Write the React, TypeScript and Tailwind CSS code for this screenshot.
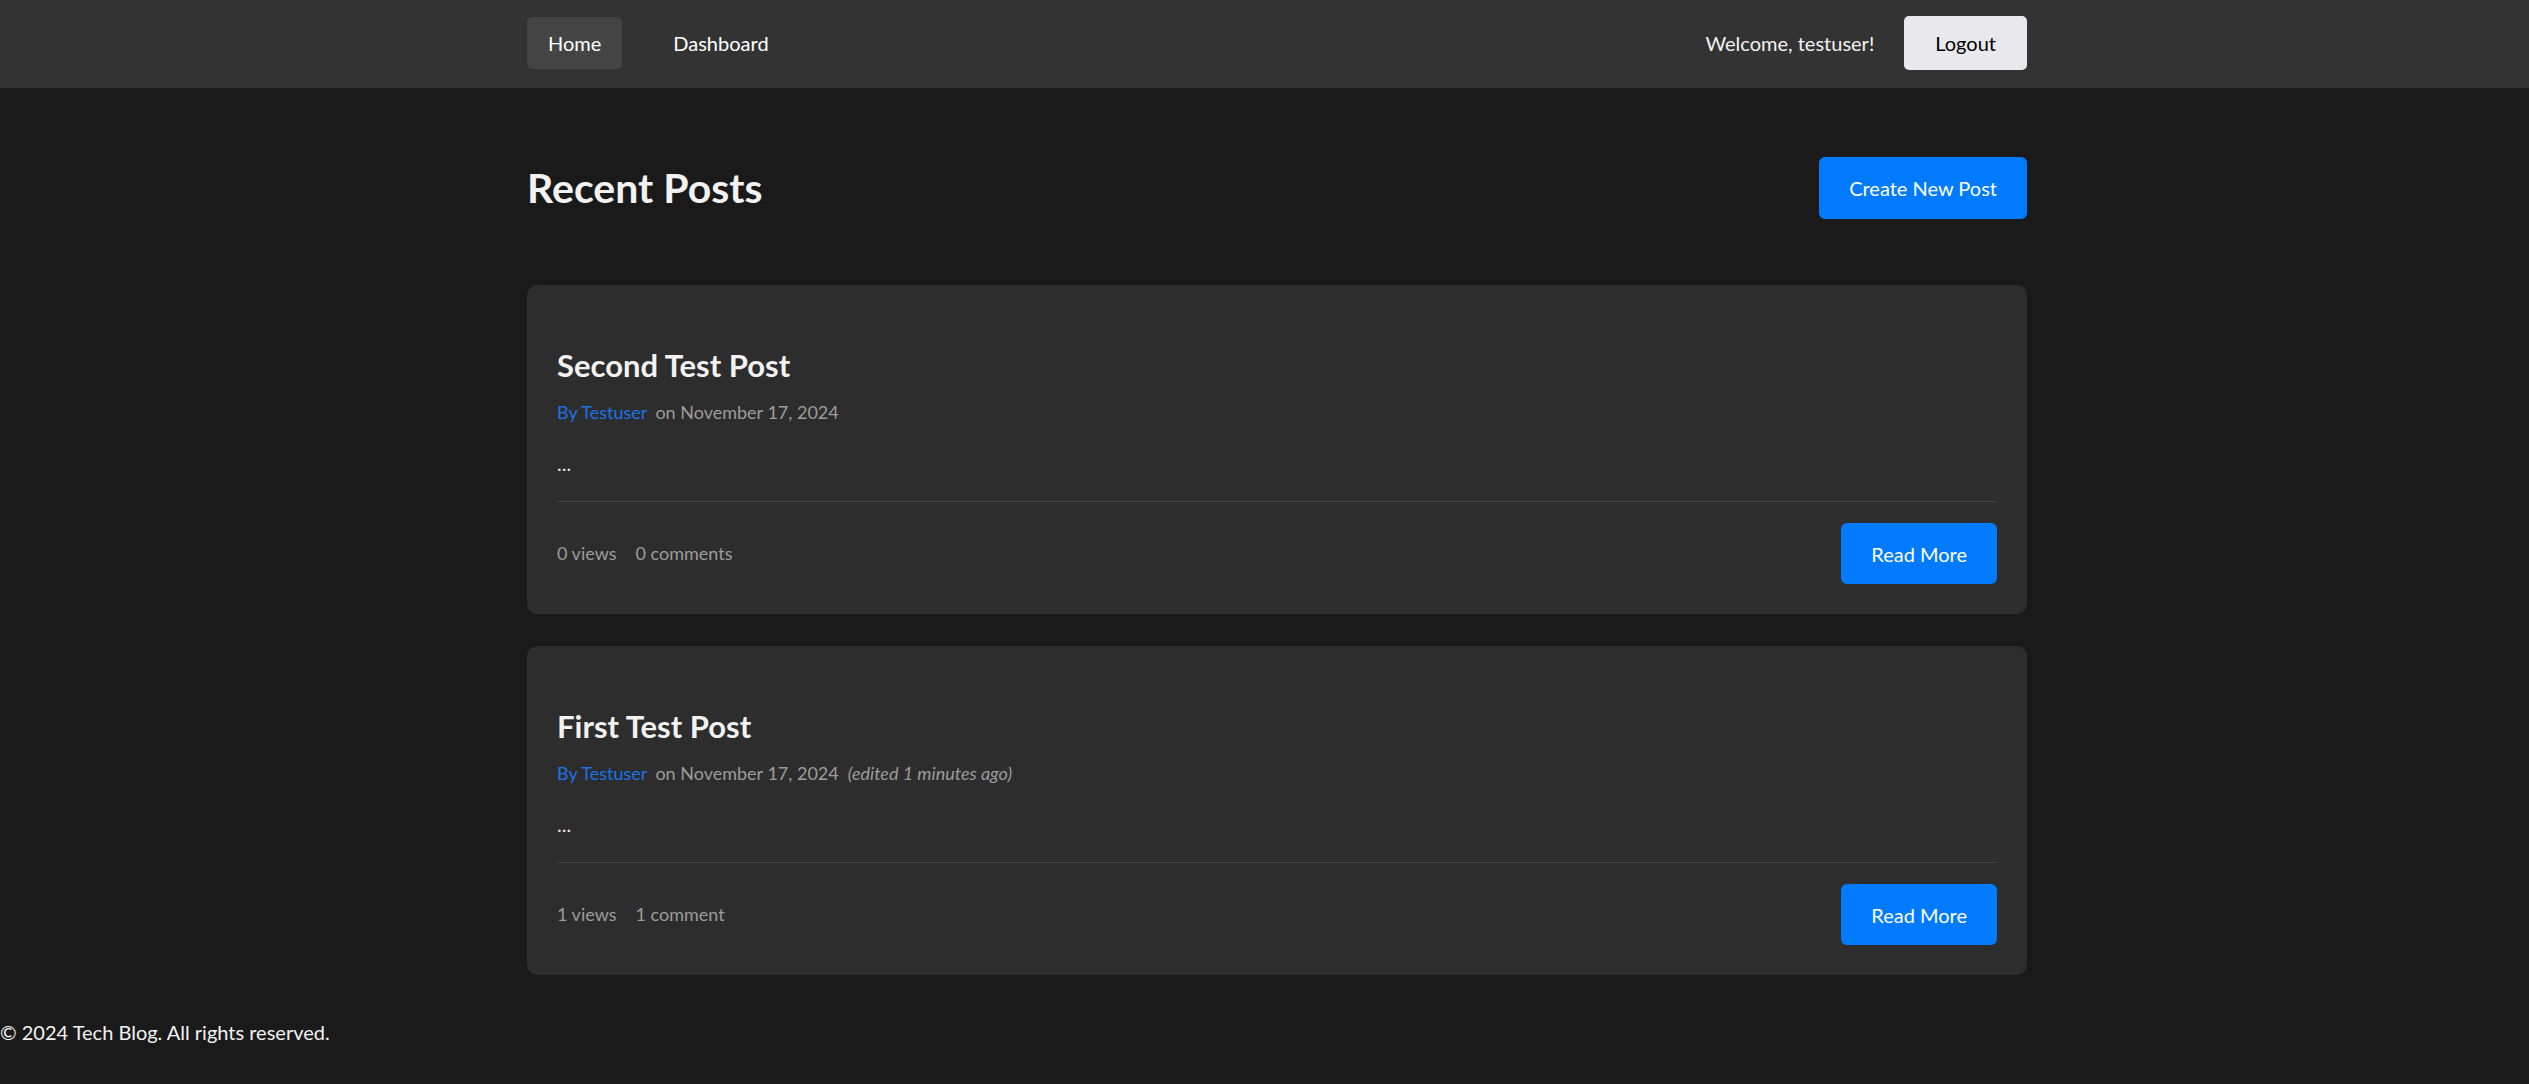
import React from "react";

const font = { fontFamily: "Lato, 'Noto Sans', sans-serif" };

type Post = {
  title: string;
  date: string;
  edited?: string;
  views: string;
  comments: string;
};

const posts: Post[] = [
  { title: "Second Test Post", date: "on November 17, 2024", views: "0 views", comments: "0 comments" },
  {
    title: "First Test Post",
    date: "on November 17, 2024",
    edited: "(edited 1 minutes ago)",
    views: "1 views",
    comments: "1 comment",
  },
];

function PostCard({ p }: { p: Post }) {
  return (
    <div className="bg-[#2d2d2d] rounded-[10px] px-[30px] pt-[30px] pb-[30px] flex flex-col">
      <h2 className="mt-[30px] text-[31px] leading-[40px] font-bold text-[#f2f2f2]">{p.title}</h2>
      <div className="mt-[15px] text-[18px] leading-[24px] flex items-center">
        <span className="text-[#1a73e8]">By Testuser</span>
        <span className="ml-[8px] text-[#9c9c9c]">{p.date}</span>
        {p.edited && <span className="ml-[9px] italic text-[#9c9c9c]">{p.edited}</span>}
      </div>
      <p className="mt-[24px] text-[20px] leading-[30px] text-[#e6e6e6]">...</p>
      <div className="mt-[23px] border-t border-[#444444]" />
      <div className="mt-[21px] flex items-center justify-between">
        <div className="flex items-center text-[18px] text-[#9c9c9c]">
          <span className="mr-[19px]">{p.views}</span>
          <span>{p.comments}</span>
        </div>
        <button className="h-[61px] px-[30px] bg-[#007bff] text-white text-[20px] rounded-[6px]">Read More</button>
      </div>
    </div>
  );
}

export default function App() {
  return (
    <div className="min-h-screen bg-[#1a1a1a] text-[#f2f2f2] pb-[33px]" style={font}>
      <nav className="h-[88px] bg-[#333333]">
        <div className="ml-[527px] w-[1500px] h-full flex items-center justify-between pb-[3px]">
          <div className="flex items-center">
            <a className="h-[52px] px-[21px] flex items-center bg-[#444444] rounded-[5px] text-[20px] text-white">Home</a>
            <a className="ml-[30px] h-[52px] px-[21px] flex items-center text-[20px] text-white">Dashboard</a>
          </div>
          <div className="flex items-center">
            <span className="text-[20px] text-[#f2f2f2]">Welcome, testuser!</span>
            <button className="ml-[30px] h-[54px] px-[31px] bg-[#e9e9ed] text-black text-[20px] rounded-[5px]">Logout</button>
          </div>
        </div>
      </nav>
      <main className="ml-[527px] w-[1500px]">
        <div className="mt-[69px] flex items-center justify-between">
          <h1 className="text-[41px] leading-[48px] font-bold text-[#f2f2f2]">Recent Posts</h1>
          <button className="h-[62px] px-[30px] bg-[#007bff] text-white text-[20px] rounded-[6px]">Create New Post</button>
        </div>
        <div className="mt-[66px] flex flex-col gap-[32px]">
          {posts.map((p) => (
            <PostCard key={p.title} p={p} />
          ))}
        </div>
      </main>
      <footer className="mt-[42px] text-[20px] leading-[30px] text-[#f2f2f2]">© 2024 Tech Blog. All rights reserved.</footer>
    </div>
  );
}
